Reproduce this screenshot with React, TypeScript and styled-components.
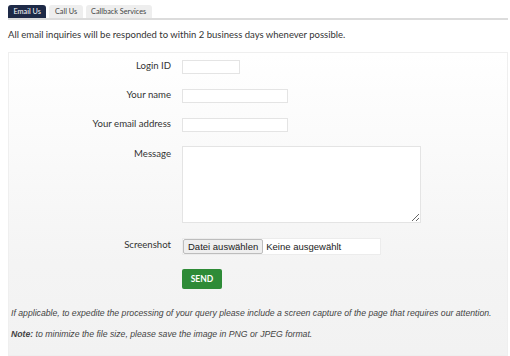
import React from "react";
import styled, { createGlobalStyle } from "styled-components";

const Global = createGlobalStyle`
  html, body { margin: 0; padding: 0; background: #fff; }
  body { font-family: Lato, "Liberation Sans", Arial, sans-serif; color: #333; }
  * { box-sizing: border-box; }
`;

const Page = styled.div`
  padding: 5px 2px 0 8px;
  width: 510px;
`;

const Tabs = styled.div`
  display: flex;
  gap: 3px;
  border-bottom: 2px solid #dcdcdc;
`;

const Tab = styled.div<{ $active?: boolean }>`
  height: 13px;
  padding: 0 5.5px;
  font-size: 7.3px;
  line-height: 13px;
  border-radius: 3px 3px 0 0;
  background: ${(p) => (p.$active ? "#1e2a47" : "#eeeeee")};
  color: ${(p) => (p.$active ? "#fff" : "#444")};
`;

const Intro = styled.p`
  margin: 9px 0 0 0;
  font-size: 9.5px;
  line-height: 12px;
  color: #333;
`;

const Panel = styled.div`
  margin-top: 11px;
  border: 1px solid #efefef;
  background: linear-gradient(#ffffff 0%, #f4f4f4 70%, #f2f2f2 100%);
  padding: 7px 0 15px 0;
`;

const Grid = styled.div`
  display: grid;
  grid-template-columns: 162px 1fr;
  column-gap: 11px;
  row-gap: 15px;
  align-items: start;
`;

const Label = styled.label<{ $pt?: number }>`
  text-align: right;
  font-size: 9.6px;
  line-height: 12px;
  color: #333;
  padding-top: ${(p) => p.$pt ?? 0}px;
`;

const Input = styled.input<{ $w: number }>`
  display: block;
  width: ${(p) => p.$w}px;
  height: 14px;
  border: 1px solid #e4e4e4;
  background: #fff;
  padding: 0 3px;
  margin: 0;
  outline: none;
`;

const TextArea = styled.textarea`
  width: 239px;
  height: 77px;
  border: 1px solid #e4e4e4;
  background: #fff;
  margin: -1px 0 0 0;
  padding: 2px;
  display: block;
  resize: both;
`;

const FileBox = styled.div`
  width: 199px;
  height: 17px;
  display: flex;
  align-items: center;
  background: #fff;
  border: 1px solid #ececec;
  font-family: "Liberation Sans", Arial, sans-serif;
  font-size: 9.5px;
  color: #222;
`;

const FileButton = styled.span`
  height: 15px;
  display: flex;
  align-items: center;
  padding: 0 4px;
  background: #efefef;
  border: 1px solid #bdbdbd;
  border-radius: 2px;
`;

const FileText = styled.span`
  padding-left: 3px;
`;

const Spacer = styled.div``;

const SendButton = styled.button`
  display: block;
  width: 40px;
  height: 20px;
  margin: -1px 0 0 0;
  border: none;
  border-radius: 2px;
  background: #2e8b37;
  color: #fff;
  font-family: Lato, "Liberation Sans", Arial, sans-serif;
  font-weight: 700;
  font-size: 8.5px;
  padding: 0;
`;

const Notes = styled.div`
  margin-top: 18px;
  padding-left: 2px;
  display: flex;
  flex-direction: column;
  gap: 9px;
  font-family: "Liberation Sans", Arial, sans-serif;
  font-size: 8.7px;
  line-height: 12px;
  font-style: italic;
  color: #444;
`;

const Note = styled.p`
  margin: 0;
`;

export default function App() {
  return (
    <>
      <Global />
      <Page>
        <Tabs>
          <Tab $active>Email Us</Tab>
          <Tab>Call Us</Tab>
          <Tab>Callback Services</Tab>
        </Tabs>
        <Intro>
          All email inquiries will be responded to within 2 business days whenever possible.
        </Intro>
        <Panel>
          <Grid>
            <Label>Login ID</Label>
            <Input $w={58} />
            <Label>Your name</Label>
            <Input $w={106} />
            <Label>Your email address</Label>
            <Input $w={106} />
            <Label $pt={1}>Message</Label>
            <TextArea />
            <Label $pt={1}>Screenshot</Label>
            <FileBox>
              <FileButton>Datei auswählen</FileButton>
              <FileText>Keine ausgewählt</FileText>
            </FileBox>
            <Spacer />
            <SendButton>SEND</SendButton>
          </Grid>
          <Notes>
            <Note>
              If applicable, to expedite the processing of your query please include a screen capture of the page that requires our attention.
            </Note>
            <Note>
              <b>Note:</b> to minimize the file size, please save the image in PNG or JPEG format.
            </Note>
          </Notes>
        </Panel>
      </Page>
    </>
  );
}
